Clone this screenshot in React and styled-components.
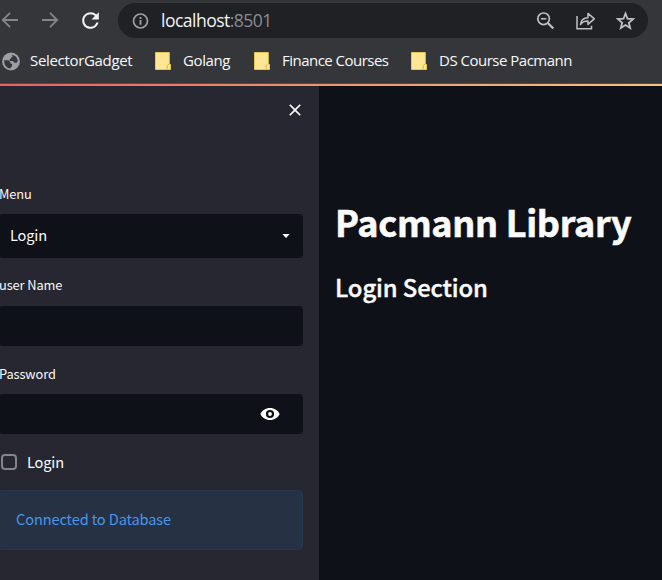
import React from 'react';
import styled, { createGlobalStyle } from 'styled-components';
import { MdRefresh, MdClose } from 'react-icons/md';

const GlobalStyle = createGlobalStyle`
  * { box-sizing: border-box; }
  body { margin: 0; background: #0e1117; overflow: hidden; }
`;

const Window = styled.div`
  width: 662px;
  height: 580px;
  display: flex;
  flex-direction: column;
  overflow: hidden;
  color: #fafafa;
  font-family: 'Noto Sans CJK SC', 'Source Sans Pro', sans-serif;
`;

const BrowserBar = styled.header`
  height: 84px;
  flex: none;
  background: #35363a;
  border-bottom: 1px solid #4f4a4c;
  font-family: 'Segoe UI', 'Open Sans', sans-serif;
`;

const Toolbar = styled.div`
  height: 41px;
  display: flex;
  align-items: center;
  padding-right: 14px;
`;

const NavButton = styled.button`
  width: 40px;
  height: 41px;
  flex: none;
  display: flex;
  align-items: center;
  justify-content: center;
  padding: 0 0 1px;
  border: 0;
  background: none;
  color: ${(p) => (p.$active ? '#f1f3f4' : '#85868a')};

  &:first-child { margin-left: -10px; }
`;

const AddressBar = styled.div`
  flex: 1;
  height: 35px;
  margin-left: 8px;
  padding: 0 12px 0 14px;
  display: flex;
  align-items: center;
  border-radius: 18px;
  background: #202124;
  color: #9aa0a6;
`;

const Url = styled.span`
  flex: 1;
  padding: 0 0 1px 11px;
  color: #f1f3f4;
  font-size: 17.6px;
  line-height: 24px;
  letter-spacing: -0.55px;
`;

const Port = styled.span`
  color: #8a8d91;
`;

const AddressActions = styled.div`
  display: flex;
  align-items: center;
  gap: 18px;
  color: #bdc1c6;

  svg { display: block; }
`;

const Bookmarks = styled.nav`
  height: 40px;
  display: flex;
  align-items: center;
  padding-left: 2px;
`;

const Bookmark = styled.a`
  display: flex;
  align-items: center;
  width: ${(p) => p.$width}px;
  flex: none;
  color: #f8f9fa;

  svg { flex: none; }
`;

const BookmarkText = styled.span`
  padding: 0 0 2px ${(p) => p.$gap || 12}px;
  font-size: 15px;
  line-height: 22px;
  letter-spacing: ${(p) => p.$tracking || -0.38}px;
  white-space: nowrap;
`;

const Decoration = styled.div`
  height: 2px;
  flex: none;
  background: linear-gradient(90deg, #ee5f60, #f0956f 50%, #f8c47c);
`;

const Page = styled.div`
  flex: 1;
  display: flex;
`;

const Sidebar = styled.aside`
  width: 319px;
  flex: none;
  padding: 0 16px 0 0;
  background: #262730;
`;

const SidebarHeader = styled.div`
  height: 97px;
  display: flex;
  justify-content: flex-end;
  padding-top: 14px;
`;

const CloseButton = styled.button`
  width: 20px;
  height: 20px;
  margin-right: -2px;
  padding: 0;
  border: 0;
  background: none;
  color: #fafafa;

  svg { display: block; }
`;

const Label = styled.label`
  display: block;
  height: 22px;
  margin: 0 0 ${(p) => p.$gap}px -1px;
  font-size: 12.8px;
  line-height: 22px;
  letter-spacing: -0.08px;
`;

const Field = styled.div`
  height: ${(p) => p.$height || 40}px;
  margin: 0 0 ${(p) => p.$after}px -1px;
  padding: 0 ${(p) => p.$end || 12}px 0 11px;
  display: flex;
  align-items: center;
  justify-content: space-between;
  border-radius: 4px;
  background: #0e1117;
  font-size: 14.6px;
  line-height: 24px;
  letter-spacing: -0.15px;
`;

const FieldText = styled.span`
  padding-bottom: 2px;
`;

const FieldIcons = styled.span`
  display: flex;
  margin-left: auto;
`;

const CheckRow = styled.label`
  height: 24px;
  display: flex;
  align-items: center;
  gap: 10px;
  margin: 0 0 16px 1px;
  font-size: 14.6px;
  line-height: 24px;
  letter-spacing: -0.15px;
`;

const CheckBox = styled.span`
  width: 16px;
  height: 16px;
  border: 2px solid #84858a;
  border-radius: 4px;
`;

const Notice = styled.div`
  height: 60px;
  margin-left: -2px;
  padding: 0 17px 2px;
  display: flex;
  align-items: center;
  border: 1px solid #26374f;
  border-radius: 4px;
  background: #263143;
  color: #4796ec;
  font-size: 14.6px;
  line-height: 24px;
  letter-spacing: -0.13px;
`;

const Main = styled.main`
  flex: 1;
  padding: 106px 0 0 16px;
  background: #0e1117;
  white-space: nowrap;
`;

const Title = styled.h1`
  margin: 0;
  font-size: 36px;
  line-height: 58px;
  font-weight: 700;
  letter-spacing: -0.3px;
  -webkit-text-stroke: 0.6px currentColor;
`;

const Subtitle = styled.h2`
  margin: 16px 0 0;
  font-size: 23.8px;
  line-height: 42px;
  font-weight: 500;
  letter-spacing: -0.1px;
  -webkit-text-stroke: 0.4px currentColor;
`;

const ArrowIcon = ({ forward }) => (
  <svg width="18" height="18" viewBox="0 0 18 18" fill="none" stroke="currentColor" strokeWidth="1.8">
    <path d={forward ? 'M1 9h15M9 1.800L16.200 9 9 16.200' : 'M17 9H2M9 1.800L1.800 9 9 16.200'} />
  </svg>
);

const InfoIcon = () => (
  <svg width="18" height="18" viewBox="0 0 18 18" fill="none" stroke="currentColor">
    <circle cx="8.500" cy="9" r="7" strokeWidth="1.700" />
    <path d="M8.500 8v4.800M8.500 5v1.900" strokeWidth="1.900" />
  </svg>
);

const ZoomOutIcon = () => (
  <svg width="22" height="22" viewBox="0 0 22 22" fill="none" stroke="currentColor">
    <circle cx="9.600" cy="8.800" r="5.800" strokeWidth="1.700" />
    <path d="M13.800 13l5.500 5.500" strokeWidth="2.300" />
    <path d="M6.800 8.800h5.600" strokeWidth="1.500" />
  </svg>
);

const ShareIcon = () => (
  <svg width="22" height="22" viewBox="0 0 22 22" fill="none" stroke="currentColor" strokeWidth="1.500">
    <path d="M3 6v12.700h14.500v-3" />
    <path d="M6.500 14.500c.4-4.500 3-6.600 7.500-6.800V3.400l6.300 5.500-6.300 5.500v-3.500c-3.500-.2-5.700 1-7.500 3.600z" strokeLinejoin="round" />
  </svg>
);

const StarIcon = () => (
  <svg width="22" height="22" viewBox="0 0 22 22" fill="none" stroke="currentColor" strokeWidth="1.800">
    <path d="M11.500 3.500l2 5.200 5.600.4-4.300 3.600 1.400 5.400-4.700-3-4.700 3 1.400-5.400-4.300-3.600 5.600-.4z" />
  </svg>
);

const GlobeIcon = () => (
  <svg width="18" height="19" viewBox="0.500 0 18 19">
    <circle cx="9.500" cy="9.500" r="8.900" fill="#9aa0a6" />
    <path d="M2.700 8.200h4.200l2 2v1.500h1.700v2.400l-2 2.300C4.800 16 2.300 12.600 2.700 8.200z" fill="#35363a" />
    <path d="M10.200 2.800c3.400.4 5.900 3.100 6.100 6.300l-1.200 1.700h-2.200L11.500 9H8.200V7.300l1.700-1.200V4.900l1.500-.4z" fill="#35363a" />
  </svg>
);

const FolderIcon = () => (
  <svg width="16" height="18" viewBox="0 0 16 18">
    <path d="M.5.500h13.800v11.300l1.200.700v5H.5z" fill="#ffe694" stroke="#e9c84f" />
    <path d="M12.200 17v-3.500l2.100-1.700" fill="none" stroke="#d9b63c" />
  </svg>
);

const CaretIcon = () => (
  <svg width="8" height="4" viewBox="0 0 8 4">
    <path d="M.4 0h7.200L4.600 3.500a.8.800 0 0 1-1.200 0z" fill="#fafafa" />
  </svg>
);

const EyeIcon = () => (
  <svg width="20" height="14" viewBox="0 0 20 14">
    <path d="M10 1C5.500 1 2 3.500.4 7 2 10.500 5.500 13 10 13s8-2.500 9.600-6C18 3.500 14.500 1 10 1z" fill="#fff" />
    <circle cx="10" cy="7" r="3" fill="#fff" stroke="#0e1117" strokeWidth="2.200" />
  </svg>
);

export default function App() {
  return (
    <>
      <GlobalStyle />
      <Window>
        <BrowserBar>
          <Toolbar>
            <NavButton aria-label="Back"><ArrowIcon /></NavButton>
            <NavButton aria-label="Forward"><ArrowIcon forward /></NavButton>
            <NavButton aria-label="Reload" $active><MdRefresh size={25} /></NavButton>
            <AddressBar>
              <InfoIcon />
              <Url>localhost<Port>:8501</Port></Url>
              <AddressActions>
                <ZoomOutIcon />
                <ShareIcon />
                <StarIcon />
              </AddressActions>
            </AddressBar>
          </Toolbar>
          <Bookmarks>
            <Bookmark $width={153}><GlobeIcon /><BookmarkText $gap={10} $tracking={-0.32}>SelectorGadget</BookmarkText></Bookmark>
            <Bookmark $width={99}><FolderIcon /><BookmarkText>Golang</BookmarkText></Bookmark>
            <Bookmark $width={157}><FolderIcon /><BookmarkText $tracking={-0.52}>Finance Courses</BookmarkText></Bookmark>
            <Bookmark $width={170}><FolderIcon /><BookmarkText $tracking={-0.5}>DS Course Pacmann</BookmarkText></Bookmark>
          </Bookmarks>
        </BrowserBar>
        <Decoration />
        <Page>
          <Sidebar>
            <SidebarHeader>
              <CloseButton aria-label="Close sidebar"><MdClose size={20} /></CloseButton>
            </SidebarHeader>
            <Label $gap={9}>Menu</Label>
            <Field $height={44} $after={16} $end={13}><FieldText>Login</FieldText><CaretIcon /></Field>
            <Label $gap={10}>user Name</Label>
            <Field $after={17} />
            <Label $gap={9}>Password</Label>
            <Field $after={16} $end={23}><FieldIcons><EyeIcon /></FieldIcons></Field>
            <CheckRow><CheckBox />Login</CheckRow>
            <Notice>Connected to Database</Notice>
          </Sidebar>
          <Main>
            <Title>Pacmann Library</Title>
            <Subtitle>Login Section</Subtitle>
          </Main>
        </Page>
      </Window>
    </>
  );
}
